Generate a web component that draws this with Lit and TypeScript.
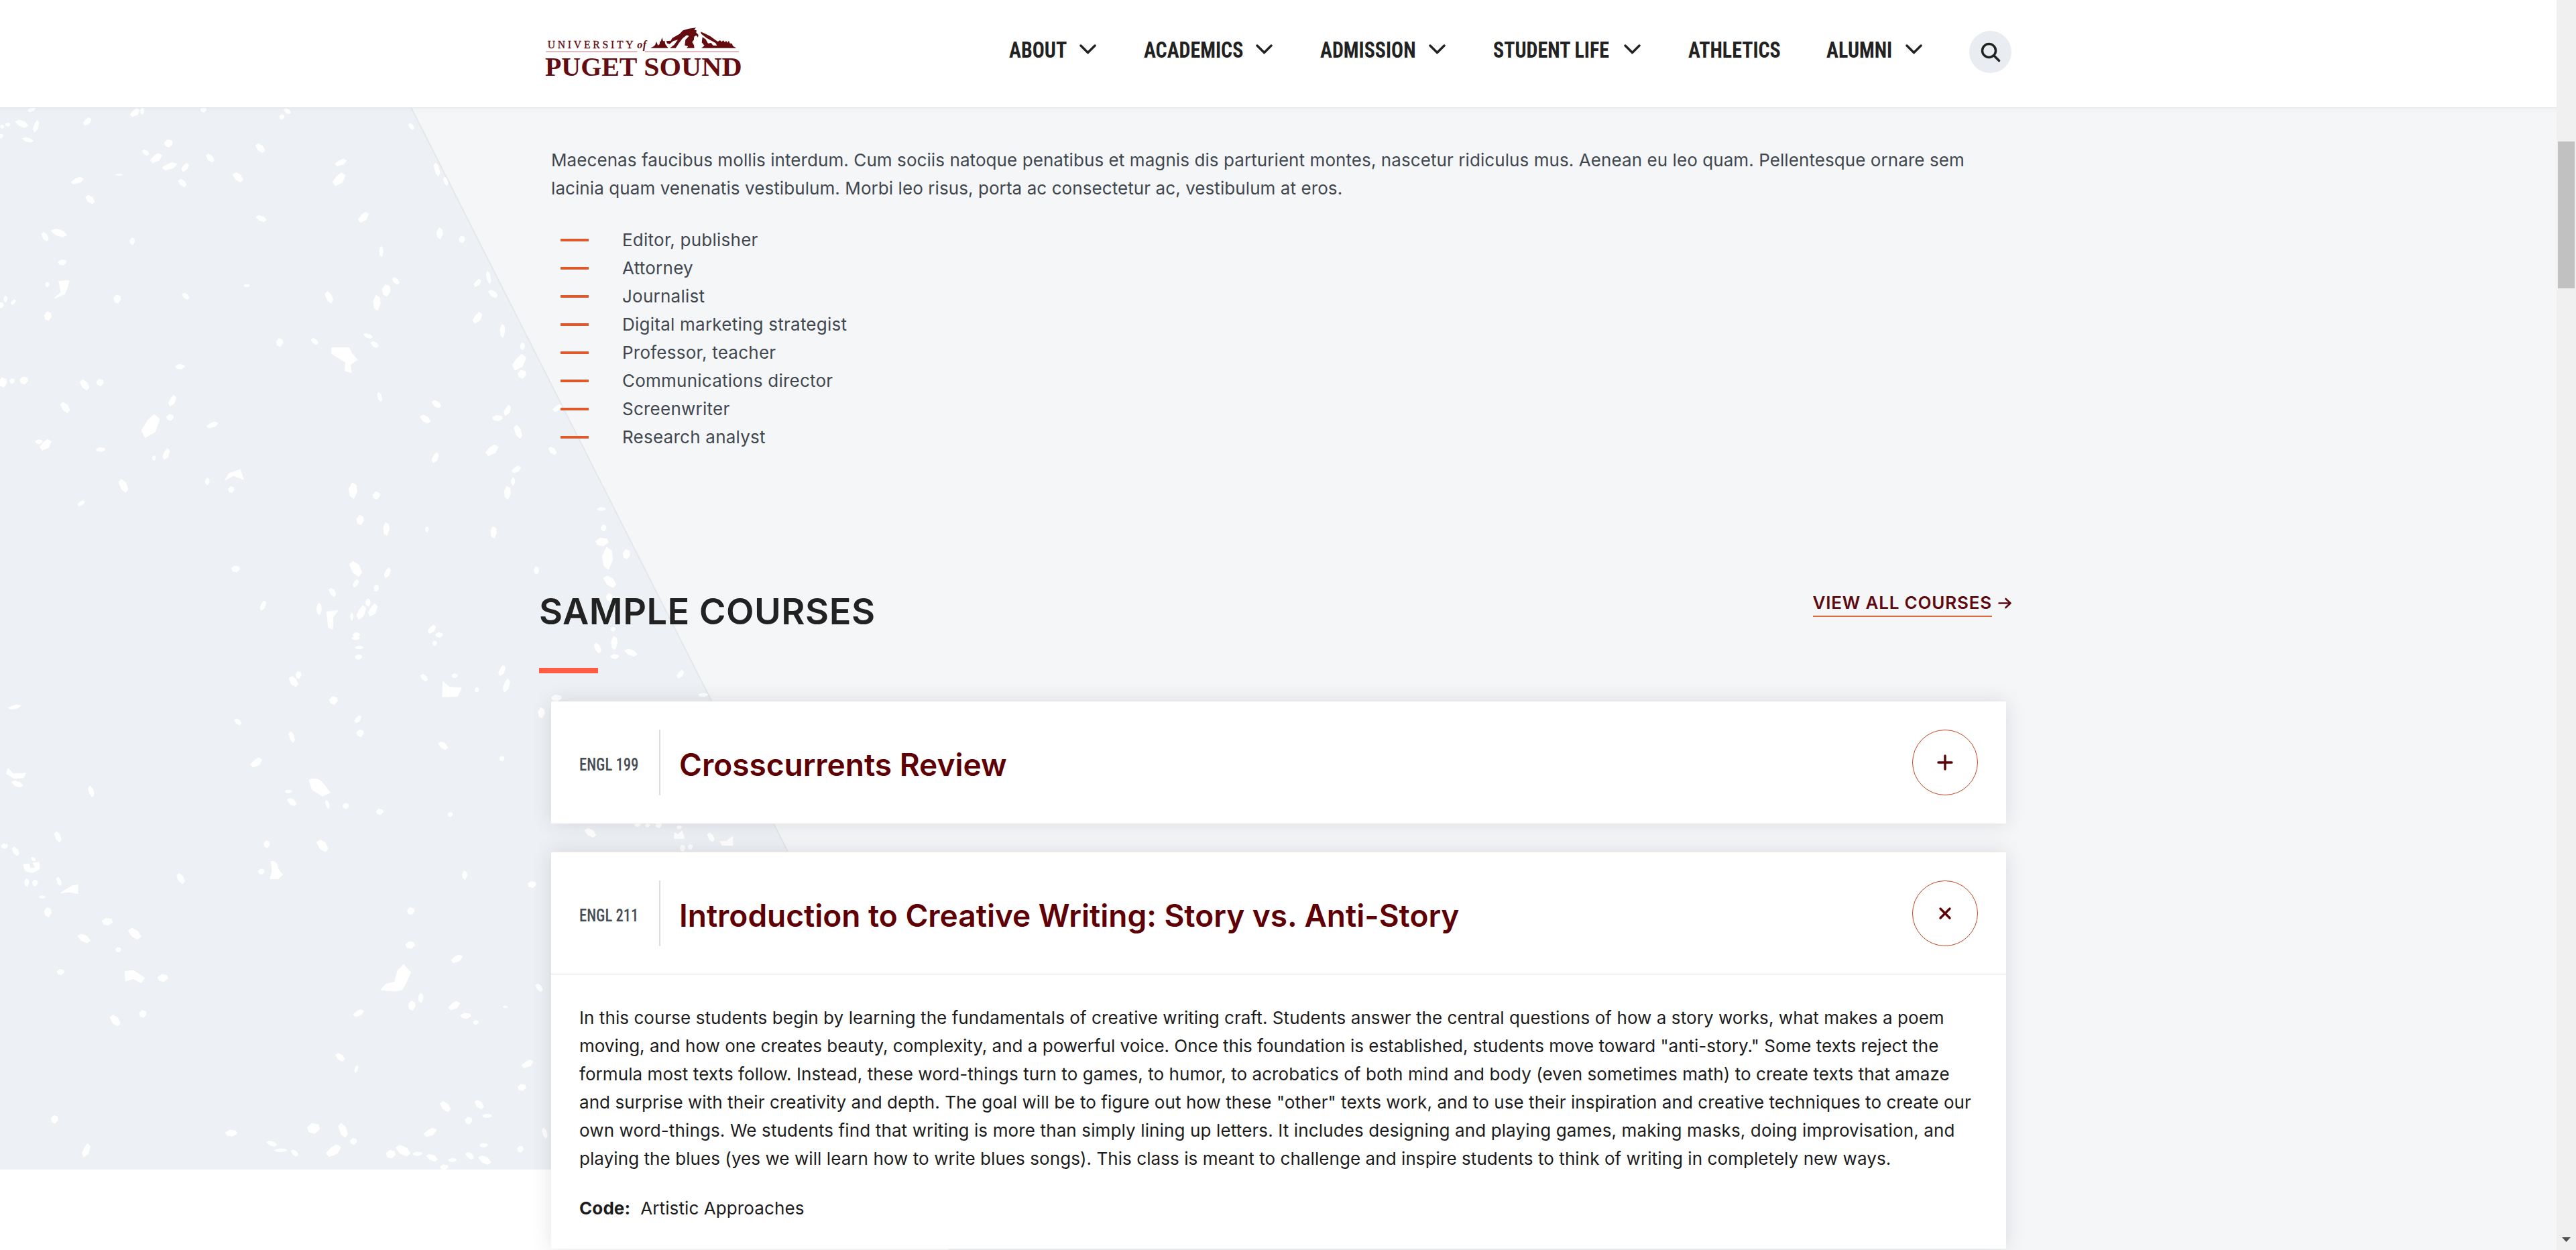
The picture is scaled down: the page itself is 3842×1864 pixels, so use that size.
import { LitElement, html, css, svg, nothing } from "lit";
import { customElement, property } from "lit/decorators.js";

// x, y, width, height, lean (1 = "/", 0 = upright, -1 = "\")
type Speck = [number, number, number, number, number];

const upperSpecks: Speck[] = [
  [57, 26, 14, 14, 1], [157, 61, 14, 22, 1], [243, 35, 16, 24, 1], [256, 30, 6, 20, 0],
  [14, 70, 8, 10, 0], [39, 68, 22, 22, -1], [65, 75, 10, 34, 1], [50, 115, 20, 14, -1],
  [2, 104, 6, 12, 0], [4, 76, 6, 10, 0], [366, 27, 10, 14, 0], [517, 31, 12, 16, -1],
  [507, 48, 8, 14, 0], [303, 125, 14, 22, 0], [262, 152, 12, 16, -1], [281, 168, 20, 28, 1],
  [305, 192, 26, 22, 1], [333, 195, 12, 24, 1], [378, 168, 14, 24, -1], [328, 241, 14, 22, -1],
  [428, 224, 18, 28, -1], [468, 139, 16, 26, -1], [610, 230, 22, 38, 1], [613, 181, 20, 20, 1],
  [214, 217, 12, 5, 0], [139, 234, 22, 20, 1], [162, 289, 16, 24, -1], [470, 345, 18, 18, -1],
  [654, 341, 18, 30, 1], [740, 76, 9, 18, -1], [786, 201, 10, 38, -1], [802, 236, 8, 24, -1],
  [791, 388, 10, 32, 0], [831, 406, 10, 20, 0], [686, 441, 6, 30, 0], [712, 527, 12, 20, -1],
  [695, 555, 14, 34, 0], [678, 591, 12, 44, 0], [592, 575, 14, 34, -1], [444, 541, 10, 8, 0],
  [334, 572, 12, 18, -1], [211, 580, 12, 24, 0], [238, 411, 8, 20, 0], [81, 398, 12, 26, -1],
  [106, 387, 28, 24, -1], [112, 473, 14, 16, 0], [85, 538, 6, 14, 0], [24, 589, 8, 14, 1],
  [10, 580, 6, 18, 0], [2, 598, 8, 16, 0], [86, 630, 12, 26, 0], [859, 533, 12, 22, 1],
  [879, 517, 8, 36, -1], [887, 565, 16, 22, -1], [859, 635, 16, 32, 1], [904, 673, 8, 38, 0],
  [940, 718, 7, 20, 0], [934, 765, 24, 46, 1], [939, 800, 14, 24, 0], [503, 707, 11, 24, 0],
  [566, 704, 12, 18, -1], [662, 688, 16, 14, -1], [674, 713, 14, 18, -1], [324, 778, 16, 14, 0],
  [5, 824, 14, 28, 0], [22, 820, 8, 14, 0], [43, 818, 14, 22, 0], [152, 831, 16, 30, -1],
  [180, 824, 12, 20, 0], [117, 897, 16, 30, -1], [310, 877, 13, 32, 1], [306, 926, 12, 18, 0],
  [271, 951, 32, 68, 1], [382, 948, 20, 18, 1], [181, 1020, 16, 12, 0], [70, 997, 12, 12, 0],
  [82, 1006, 20, 32, 1], [299, 1033, 12, 32, 1], [277, 1045, 5, 14, 0], [222, 1126, 16, 38, -1],
  [373, 1113, 7, 20, 0], [416, 1137, 10, 18, 0], [146, 1177, 12, 16, 1], [683, 866, 8, 26, -1],
  [785, 887, 16, 22, -1], [765, 931, 18, 24, -1], [913, 905, 12, 30, 1], [895, 928, 18, 16, 0],
  [932, 968, 14, 38, -1], [885, 1022, 22, 32, 1], [994, 1024, 14, 22, -1], [1003, 899, 16, 20, 1],
  [783, 1044, 12, 30, 1], [929, 1078, 16, 20, 1], [923, 1113, 6, 22, 0], [913, 1146, 11, 38, 0],
  [635, 1140, 14, 46, 0], [677, 1154, 12, 22, 0], [648, 1226, 12, 28, 0], [695, 1252, 10, 38, 0],
  [768, 1253, 5, 16, 0], [888, 1262, 10, 34, 0], [640, 1369, 22, 44, -1], [697, 1380, 11, 30, 1],
  [424, 1369, 14, 18, 0], [640, 1411, 10, 22, 1], [677, 1425, 8, 20, 0], [598, 1437, 12, 24, -1],
  [473, 1476, 10, 28, 1], [574, 1486, 8, 34, 0], [662, 1467, 8, 22, 0], [650, 1496, 16, 40, 1],
  [671, 1489, 16, 36, 1], [633, 1508, 4, 22, 0], [777, 1545, 14, 24, 1], [790, 1562, 12, 14, 0],
  [641, 1562, 12, 14, 0], [965, 1373, 8, 22, 0], [1082, 1194, 14, 10, 0], [1086, 1249, 9, 18, 0],
  [1083, 1290, 22, 24, 0], [1127, 1326, 12, 28, 0], [1093, 1338, 18, 64, 0], [1097, 1406, 22, 34, -1],
  [1096, 1452, 10, 22, 0], [1103, 1545, 8, 12, 0],
];

const lowerSpecks: Speck[] = [
  [640, 3, 14, 8, 0], [646, 27, 14, 8, 0], [645, 51, 12, 12, 0], [782, 16, 7, 12, 0],
  [1075, 28, 12, 26, -1], [1105, 15, 10, 34, 0], [1106, 50, 14, 11, 0], [1135, 40, 22, 18, -1],
  [1224, 95, 12, 20, 1], [1265, 148, 16, 9, 0], [1001, 156, 18, 16, 0], [974, 194, 11, 26, 0],
  [528, 114, 16, 26, -1], [537, 97, 9, 18, 0], [763, 104, 12, 18, -1], [818, 99, 10, 10, 0],
  [858, 135, 6, 12, 0], [903, 86, 12, 26, 1], [911, 124, 12, 34, 1], [600, 162, 14, 20, 0],
  [26, 179, 22, 12, 1], [428, 217, 12, 16, -1], [644, 210, 11, 18, 1], [648, 246, 12, 18, 0],
  [525, 256, 10, 28, -1], [797, 278, 16, 20, -1], [903, 311, 8, 12, 0], [461, 321, 20, 24, 1],
  [31, 376, 20, 16, -1], [164, 395, 10, 28, -1], [519, 395, 12, 8, 0], [525, 422, 16, 20, -1],
  [589, 428, 7, 20, -1], [622, 432, 10, 14, 0], [683, 447, 12, 14, 0], [810, 454, 8, 12, 0],
  [104, 511, 12, 26, -1], [480, 530, 10, 18, 0], [580, 534, 20, 30, -1], [8, 535, 11, 12, 0],
  [28, 548, 12, 22, -1], [48, 628, 7, 20, 0], [63, 629, 9, 16, 0], [60, 568, 8, 10, -1],
  [106, 625, 8, 22, -1], [76, 665, 10, 7, 0], [86, 704, 12, 24, 0], [325, 618, 14, 26, -1],
  [470, 600, 10, 14, 0], [836, 609, 8, 22, 0], [957, 633, 14, 16, 0], [1062, 501, 20, 22, -1],
  [1147, 481, 10, 8, 0], [1165, 482, 8, 8, 0], [1185, 481, 10, 14, 0], [1279, 512, 12, 22, -1],
  [1228, 540, 8, 16, 0], [1242, 537, 8, 12, 0], [1222, 487, 8, 8, 0], [739, 701, 12, 18, 0],
  [738, 788, 16, 18, 0], [822, 823, 20, 20, 1], [193, 728, 18, 18, 0], [242, 759, 22, 28, -1],
  [151, 771, 22, 22, -1], [213, 800, 9, 12, 0], [109, 857, 12, 14, 0], [293, 872, 18, 18, 0],
  [257, 964, 12, 18, 0], [207, 981, 18, 28, -1], [645, 962, 18, 18, 1], [757, 923, 8, 24, 0],
  [741, 943, 12, 24, 0], [817, 943, 20, 22, 1], [838, 969, 18, 14, 0], [856, 986, 9, 10, 0],
  [970, 897, 12, 20, -1], [909, 946, 8, 5, 0], [612, 1075, 16, 20, -1], [641, 1105, 6, 18, 1],
  [949, 1092, 20, 20, 1], [939, 1152, 14, 16, 0], [801, 1201, 18, 26, -1], [862, 1196, 16, 22, -1],
  [876, 1225, 16, 9, 0], [843, 1237, 12, 18, 0], [98, 1234, 12, 20, 0], [155, 1313, 14, 34, 1],
  [416, 1269, 20, 16, 0], [564, 1257, 22, 26, 0], [617, 1262, 16, 36, -1], [636, 1290, 11, 16, 0],
  [489, 1296, 18, 14, -1], [505, 1313, 22, 8, 0], [530, 1320, 12, 16, -1], [600, 1314, 26, 30, 1],
  [774, 1267, 22, 22, 1], [703, 1323, 16, 20, 0], [725, 1314, 26, 28, -1], [751, 1322, 16, 9, 0],
  [777, 1332, 20, 18, -1], [814, 1338, 14, 9, 0], [845, 1327, 14, 18, -1], [872, 1338, 22, 22, -1],
  [870, 1300, 14, 10, 0], [936, 1310, 10, 16, 0], [980, 1269, 9, 26, -1], [799, 1356, 14, 12, 0],
];

const outlines: Record<string, number[][]> = {
  "1": [[0.7, 0], [1, 0.2], [0.75, 0.75], [0.2, 1], [0, 0.7], [0.35, 0.25]],
  "0": [[0.4, 0], [0.9, 0.15], [1, 0.55], [0.6, 1], [0.15, 0.85], [0, 0.4]],
  "-1": [[0.3, 0], [0.75, 0.25], [1, 0.75], [0.75, 1], [0.3, 0.75], [0, 0.2]],
};

const speckPath = (specks: Speck[]) =>
  specks
    .map(([x, y, w, h, lean]) => {
      const points = outlines[String(lean)].map(
        ([px, py]) => `${(x + (px - 0.5) * w).toFixed(1)} ${(y + (py - 0.5) * h).toFixed(1)}`
      );
      return `M${points.join("L")}Z`;
    })
    .join("");

@customElement("site-logo")
class SiteLogo extends LitElement {
  static styles = css`
    :host {
      display: block;
    }

    svg {
      display: block;
      width: 300px;
      height: 100px;
      overflow: visible;
      fill: #650c10;
      font-family: "Liberation Serif", serif;
    }

    .top {
      font-size: 47px;
      stroke: #650c10;
      stroke-width: 1px;
    }

    .of {
      font-size: 48px;
      font-style: italic;
      font-weight: 700;
    }

    .name {
      font-size: 119px;
      font-weight: 700;
    }

    .rule {
      fill: #dfbcc0;
    }
  `;

  render() {
    return html`
      <svg viewBox="99 54 900 300">
        <text class="top" x="110" y="155" textLength="384">UNIVERSITY</text>
        <text class="of" x="511" y="155" textLength="41">of</text>
        <path
          d="M570 155L584 148L591 142L597 126L604 143L611 138L613 124L617 126L622 107L627 124L634 123L637 138L650 155Z"
        />
        <path
          d="M641 124L661 122L668 110L688 99L700 92L716 76L742 68L775 64L766 72L778 77L774 84L785 96L783 107L775 98L766 104L765 118L757 128L765 142L767 155L732 155L739 147L724 143L727 118L743 101L733 97L714 112L700 130L683 155L657 155L676 141L693 118L672 124L656 137L645 134Z"
        />
        <path d="M795 82L812 89L838 102L866 122L895 143L878 142L850 126L822 110L798 92Z" />
        <path
          d="M803 106L818 116L828 134L842 132L850 143L868 144L857 122L872 126L882 120L888 127L897 121L903 130L909 122L915 131L921 122L926 134L934 134L940 146L955 155L798 155L812 144L800 130Z"
        />
        <rect class="rule" x="103" y="168" width="409" height="6" />
        <rect class="rule" x="545" y="168" width="421" height="6" />
        <text class="name" x="99" y="279" textLength="412" lengthAdjust="spacingAndGlyphs">PUGET</text>
        <text class="name" x="541" y="279" textLength="439" lengthAdjust="spacingAndGlyphs">SOUND</text>
      </svg>
    `;
  }
}

@customElement("site-header")
class SiteHeader extends LitElement {
  static styles = css`
    :host {
      display: flex;
      justify-content: space-between;
      align-items: flex-start;
      box-sizing: border-box;
      height: 160px;
      padding: 38px 813px 0 813px;
      background: #fff;
    }

    nav {
      display: flex;
      align-items: flex-start;
      gap: 72px;
      margin-top: 8px;
      font: 700 33.5px/57px Roboto, sans-serif;
      font-stretch: 75%;
      color: #222;
    }

    a {
      display: flex;
      align-items: center;
      gap: 19px;
    }

    .label {
      white-space: nowrap;
      transform: translateX(-1px) scaleX(0.895);
      transform-origin: 0 50%;
    }

    .chevron {
      width: 25px;
      height: 15px;
      margin-top: -3px;
    }

    .search {
      display: grid;
      place-items: center;
      width: 63px;
      height: 63px;
      margin-left: -2px;
      border-radius: 50%;
      background: #e9edf2;
    }

    .search svg {
      width: 30px;
      height: 30px;
    }

    svg {
      fill: none;
      stroke: #222;
      stroke-width: 3.5;
      stroke-linecap: round;
      stroke-linejoin: round;
    }
  `;

  // label, width of the narrowed label, has a submenu
  items: [string, number, boolean][] = [
    ["ABOUT", 85, true],
    ["ACADEMICS", 147, true],
    ["ADMISSION", 142, true],
    ["STUDENT LIFE", 175, true],
    ["ATHLETICS", 134, false],
    ["ALUMNI", 98, true],
  ];

  render() {
    return html`
      <site-logo></site-logo>
      <nav>
        ${this.items.map(
          ([label, width, hasMenu]) => html`
            <a>
              <span class="label" style="width: ${width}px">${label}</span>
              ${hasMenu
                ? html`<svg class="chevron" viewBox="0 0 25 15"><path d="M2 2l10.500 10.500L23 2" /></svg>`
                : nothing}
            </a>
          `
        )}
        <div class="search">
          <svg viewBox="0 0 30 30">
            <circle cx="12.500" cy="12.500" r="10" />
            <path d="M20 20l7.500 7.500" />
          </svg>
        </div>
      </nav>
    `;
  }
}

@customElement("course-card")
class CourseCard extends LitElement {
  @property() code = "";
  @property() heading = "";
  @property({ type: Boolean, reflect: true }) open = false;

  static styles = css`
    :host {
      display: block;
      background: #fff;
      box-shadow: 0 0 28px rgba(40, 40, 50, 0.13);
    }

    header {
      display: flex;
      align-items: center;
      box-sizing: border-box;
      height: 182px;
      padding: 0 42px;
    }

    :host([open]) header {
      height: 183px;
      border-top: 1px solid #f3ece6;
      border-bottom: 1px solid #dcdee0;
    }

    .code {
      width: 119px;
      padding-top: 6px;
      font: 500 26px/40px Roboto, sans-serif;
      font-stretch: 75%;
      color: #464c54;
      transform: scaleX(0.87);
      transform-origin: 0 50%;
    }

    .heading {
      flex: 1;
      display: flex;
      align-items: center;
      height: 98px;
      box-sizing: border-box;
      padding: 6px 0 0 28px;
      border-left: 2px solid #dcdee0;
      font: 600 46px/60px Inter, sans-serif;
      color: #5e0004;
    }

    .toggle {
      display: grid;
      place-items: center;
      box-sizing: border-box;
      width: 98px;
      height: 98px;
      border: 1px solid #c04420;
      border-radius: 50%;
    }

    svg {
      width: 24px;
      height: 24px;
      fill: none;
      stroke: #5e0004;
      stroke-width: 3.4;
      stroke-linecap: round;
    }

    .body {
      padding: 44px 42px 0;
      font: 400 26px/42px Inter, sans-serif;
      color: #1c1c1c;
    }
  `;

  render() {
    return html`
      <header>
        <div class="code">${this.code}</div>
        <div class="heading">${this.heading}</div>
        <div class="toggle">
          <svg viewBox="0 0 24 24">
            <path d=${this.open ? "M5 5l14 14M19 5L5 19" : "M12 2v20M2 12h20"} />
          </svg>
        </div>
      </header>
      ${this.open ? html`<div class="body"><slot></slot></div>` : nothing}
    `;
  }
}

@customElement("page-backdrop")
class PageBackdrop extends LitElement {
  static styles = css`
    :host {
      display: block;
    }

    svg {
      display: block;
      width: 3813px;
      height: 1704px;
      background: #f4f6f8;
    }

    .specks {
      fill: #fff;
      stroke: #fff;
      stroke-width: 1.5;
      stroke-linejoin: round;
    }
  `;

  render() {
    return html`
      <svg viewBox="0 160 3813 1704">
        <rect y="1744" width="1415" height="120" fill="#fff" />
        <path d="M0 160H613L1415 1744H0Z" fill="#edf0f4" />
        <path d="M613 160L1415 1744" stroke="#e6e7eb" stroke-width="2" />
        ${svg`
          <g class="specks" transform="translate(0 150) scale(0.829 0.5102)">
            <path d=${speckPath(upperSpecks)} />
            <path d="M597 722L628 722L632 738L643 757L630 772L632 795L621 790L622 765L597 740Z" />
            <path d="M124 526Q122 545 116 566L98 578L110 560L106 528Z" />
            <path d="M405 1110L412 1090L432 1078L438 1108L420 1096Z" />
            <path d="M588 1494L608 1490L599 1510L598 1545L591 1540Z" />
          </g>
          <g class="specks" transform="translate(0 950) scale(0.829 0.5829)">
            <path d=${speckPath(lowerSpecks)} />
            <path d="M797 114L808 128L830 130L823 152L796 153Z" />
            <path d="M556 366Q566 358 577 368L594 398L580 407L562 390Z" />
            <path d="M14 336L24 350L46 348L42 360L26 362L12 350Z" />
            <path d="M42 582L52 580L54 592L64 590L60 578L70 576L71 594L58 603L46 598Z" />
            <path d="M488 574Q498 572 500 592L508 608L500 619L486 618L490 600Z" />
            <path d="M109 655L130 636L140 634V656L124 652Z" />
            <path d="M726 838L739 858L724 902L710 906L685 903L694 888L710 882L716 852Z" />
            <path d="M225 855L240 853L260 872L254 884L240 874L226 880Z" />
            <path d="M1214 500L1220 506L1227 496L1231 515H1213Z" />
            <path d="M1295 523L1308 522L1318 510V533L1300 533Z" />
          </g>
        `}
      </svg>
    `;
  }
}

@customElement("page-scrollbar")
class PageScrollbar extends LitElement {
  static styles = css`
    :host {
      display: flex;
      flex-direction: column;
      justify-content: space-between;
      align-items: center;
      box-sizing: border-box;
      width: 29px;
      padding: 211px 0 12px;
      background: #f0f0f0;
    }

    .thumb {
      width: 25px;
      height: 219px;
      background: #c1c1c1;
    }

    svg {
      width: 13px;
      height: 7px;
      fill: #505050;
    }
  `;

  render() {
    return html`
      <div class="thumb"></div>
      <svg viewBox="0 0 13 7"><path d="M0 0h13L6.500 7z" /></svg>
    `;
  }
}

@customElement("app-root")
class AppRoot extends LitElement {
  static styles = css`
    :host {
      display: flex;
      height: 1864px;
      overflow: hidden;
      font: 400 26px/42px Inter, sans-serif;
      color: #41474f;
    }

    .page {
      width: 3813px;
    }

    /* backdrop and content share one cell */
    main {
      display: grid;
      grid-template: 1704px / 3813px;
      overflow: hidden;
    }

    page-backdrop,
    .content {
      grid-area: 1 / 1;
    }

    .content {
      box-shadow: inset 0 1px #e4e6e9, inset 0 8px 12px -8px rgba(40, 40, 60, 0.05);
      z-index: 1;
      padding: 58px 813px 0 804px;
    }

    p {
      margin: 0;
    }

    .line {
      display: block;
      white-space: nowrap;
    }

    .intro {
      padding-left: 18px;
      letter-spacing: 0.08px;
    }

    ul {
      list-style: none;
      margin: 35px 0 0 32px;
      padding: 0;
      letter-spacing: 0.24px;
    }

    li {
      display: flex;
      align-items: center;
      gap: 50px;
    }

    li::before {
      content: "";
      width: 42px;
      height: 4px;
      background: #dd5a2c;
    }

    .section-head {
      display: flex;
      justify-content: space-between;
      align-items: flex-start;
      margin-top: 206px;
    }

    h2 {
      margin: 0;
      font: 600 54px/66px Inter, sans-serif;
      letter-spacing: 0.5px;
      color: #222;
    }

    .bar {
      width: 88px;
      height: 8px;
      margin-top: 51px;
      background: #ff5c43;
    }

    .all {
      display: flex;
      align-items: center;
      gap: 9px;
      color: #5e0a10;
    }

    .all span {
      border-bottom: 2px solid #dd6a40;
      font-weight: 600;
      line-height: 39px;
      letter-spacing: 0.8px;
    }

    .all svg {
      width: 20px;
      height: 17px;
      fill: none;
      stroke: #5e0a10;
      stroke-width: 2.6;
      stroke-linecap: round;
      stroke-linejoin: round;
    }

    .courses {
      display: flex;
      flex-direction: column;
      gap: 42px;
      width: 2170px;
      margin: 42px 0 0 18px;
    }

    course-card[open] {
      height: 592px;
    }

    .description {
      letter-spacing: 0.07px;
    }

    .description .line:nth-child(2) {
      letter-spacing: 0;
    }

    .description .line:nth-child(5) {
      letter-spacing: 0.13px;
    }

    .requirement {
      margin-top: 32px;
      letter-spacing: 0.1px;
    }

    .requirement b {
      margin-right: 15px;
      font-weight: 700;
    }
  `;

  intro = [
    "Maecenas faucibus mollis interdum. Cum sociis natoque penatibus et magnis dis parturient montes, nascetur ridiculus mus. Aenean eu leo quam. Pellentesque ornare sem",
    "lacinia quam venenatis vestibulum. Morbi leo risus, porta ac consectetur ac, vestibulum at eros.",
  ];

  careers = [
    "Editor, publisher",
    "Attorney",
    "Journalist",
    "Digital marketing strategist",
    "Professor, teacher",
    "Communications director",
    "Screenwriter",
    "Research analyst",
  ];

  description = [
    "In this course students begin by learning the fundamentals of creative writing craft. Students answer the central questions of how a story works, what makes a poem",
    'moving, and how one creates beauty, complexity, and a powerful voice. Once this foundation is established, students move toward "anti-story." Some texts reject the',
    "formula most texts follow. Instead, these word-things turn to games, to humor, to acrobatics of both mind and body (even sometimes math) to create texts that amaze",
    'and surprise with their creativity and depth. The goal will be to figure out how these "other" texts work, and to use their inspiration and creative techniques to create our',
    "own word-things. We students find that writing is more than simply lining up letters. It includes designing and playing games, making masks, doing improvisation, and",
    "playing the blues (yes we will learn how to write blues songs). This class is meant to challenge and inspire students to think of writing in completely new ways.",
  ];

  render() {
    return html`
      <div class="page">
        <site-header></site-header>
        <main>
          <page-backdrop></page-backdrop>
          <div class="content">
            <p class="intro">${this.intro.map((line) => html`<span class="line">${line}</span>`)}</p>
            <ul>
              ${this.careers.map((career) => html`<li>${career}</li>`)}
            </ul>

            <div class="section-head">
              <div>
                <h2>SAMPLE COURSES</h2>
                <div class="bar"></div>
              </div>
              <a class="all">
                <span>VIEW ALL COURSES</span>
                <svg viewBox="0 0 20 17"><path d="M1.500 8.500H18.500M11.500 2l7 6.500l-7 6.500" /></svg>
              </a>
            </div>

            <div class="courses">
              <course-card code="ENGL 199" heading="Crosscurrents Review"></course-card>
              <course-card open code="ENGL 211" heading="Introduction to Creative Writing: Story vs. Anti-Story">
                <p class="description">
                  ${this.description.map((line) => html`<span class="line">${line}</span>`)}
                </p>
                <p class="requirement"><b>Code:</b>Artistic Approaches</p>
              </course-card>
            </div>
          </div>
        </main>
      </div>
      <page-scrollbar></page-scrollbar>
    `;
  }
}
